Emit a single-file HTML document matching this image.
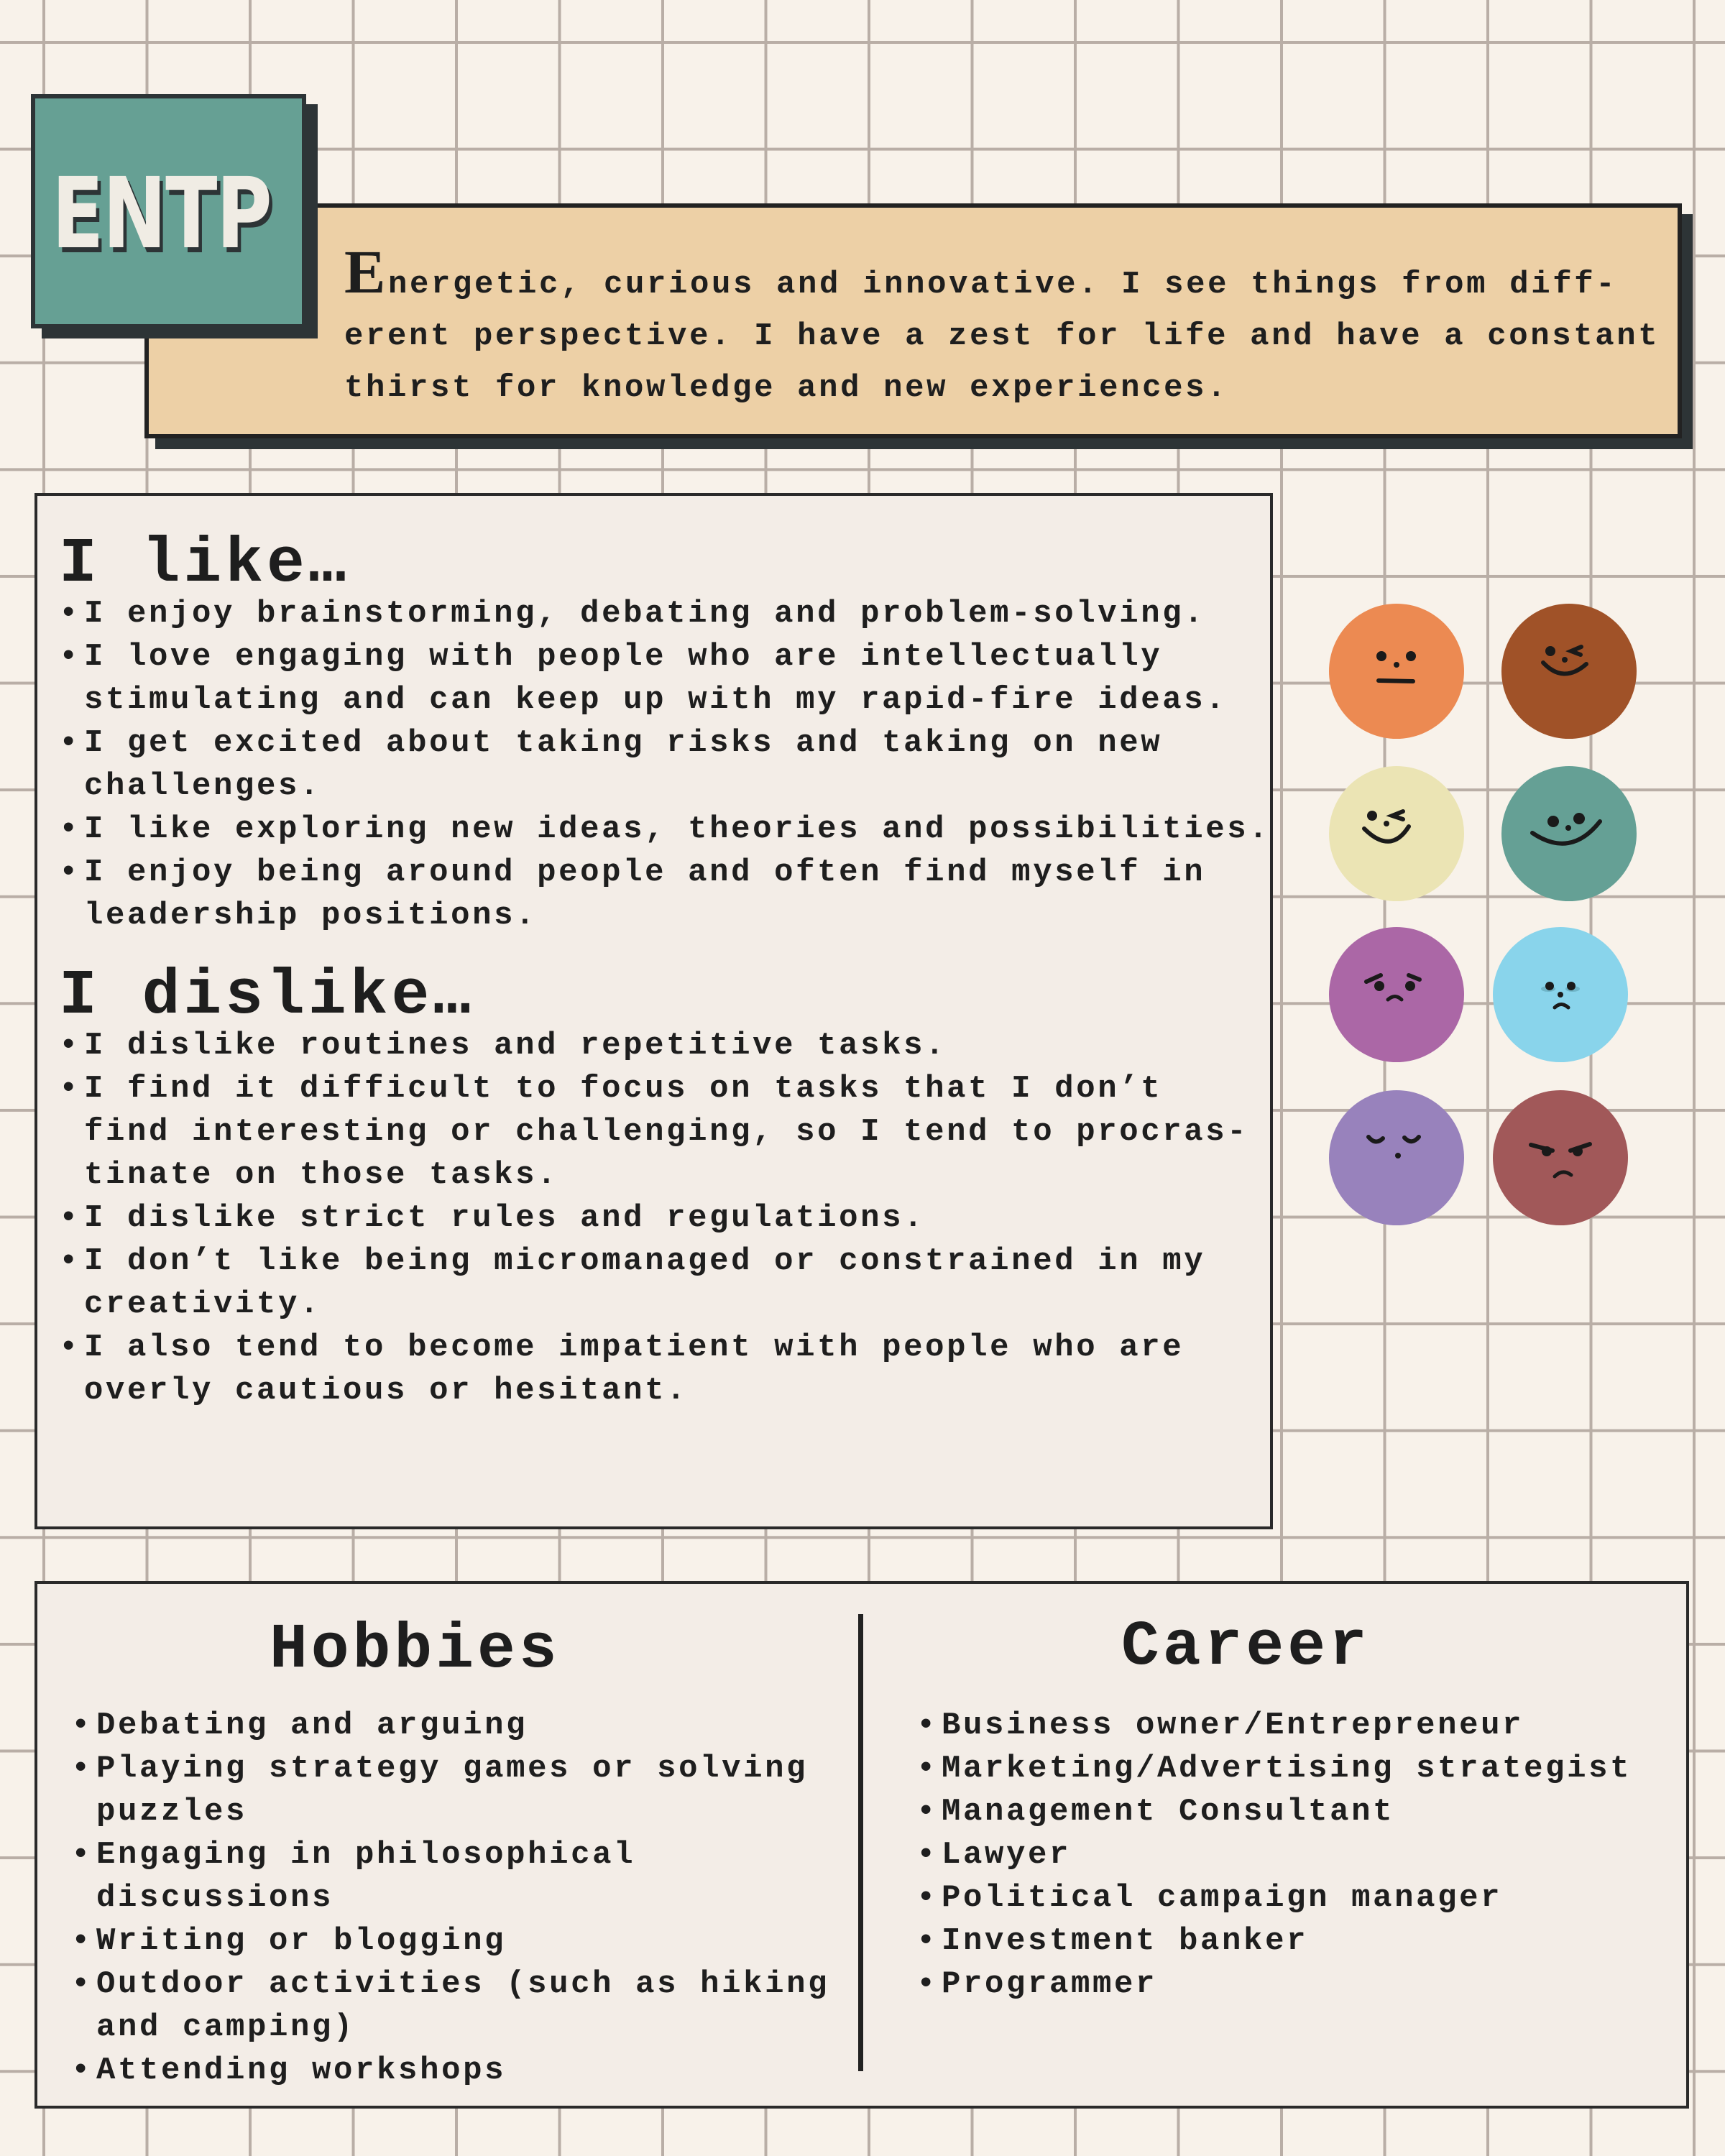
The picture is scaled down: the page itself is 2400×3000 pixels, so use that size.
<!DOCTYPE html>
<html><head><meta charset="utf-8"><style>
body{margin:0;width:2400px;height:3000px;position:relative;overflow:hidden;background-color:#f8f2ea;
background-image:linear-gradient(90deg,#b9aea6 4px,transparent 4px),linear-gradient(#b9aea6 4px,transparent 4px);
background-size:143.5px 100%,100% 148.6px;background-position:59px 0,0 57px;
font-family:"Liberation Mono",monospace;font-weight:bold;color:#1e1e1e}
.abs{position:absolute}
.t{font-size:44px;letter-spacing:3.6px;line-height:60px;white-space:nowrap}
.l{position:relative;padding-left:31px}
.l::before{content:"•";position:absolute;left:-4px;letter-spacing:0}
h2{margin:0;font-size:88px;line-height:88px;letter-spacing:5px;font-weight:bold;white-space:nowrap}
</style></head><body>
<div class="abs" style="left:216px;top:298px;width:2139px;height:327px;background:#2d3436"></div>
<div class="abs" style="left:201px;top:283px;width:2127px;height:315px;background:#edd0a6;border:6px solid #222"></div>
<div class="abs" style="left:58px;top:145px;width:384px;height:326px;background:#2d3436"></div>
<div class="abs" style="left:43px;top:131px;width:371px;height:314px;background:#66a094;border:6px solid #2d3436"></div>
<div class="abs" style="left:72px;top:218px;font-family:'DejaVu Sans',sans-serif;font-size:136px;line-height:160px;color:#f0ece4;text-shadow:6px 7px 0 #2d3436;transform:scaleX(0.78);transform-origin:0 0;letter-spacing:-2px">ENTP</div>
<div class="abs t" style="left:479px;top:360px;line-height:72px"><span style="font-family:'Liberation Serif',serif;font-size:86px;line-height:0">E</span>nergetic, curious and innovative. I see things from diff-<br>erent perspective. I have a zest for life and have a constant<br>thirst for knowledge and new experiences.</div>

<div class="abs" style="left:48px;top:686px;width:1715px;height:1434px;background:#f3ede7;border:4px solid #2a2a2a"></div>
<h2 class="abs" style="left:82px;top:742px">I like…</h2>
<div class="abs t" style="left:86px;top:824px">
<div class="l">I enjoy brainstorming, debating and problem-solving.</div>
<div class="l">I love engaging with people who are intellectually<br>stimulating and can keep up with my rapid-fire ideas.</div>
<div class="l">I get excited about taking risks and taking on new<br>challenges.</div>
<div class="l">I like exploring new ideas, theories and possibilities.</div>
<div class="l">I enjoy being around people and often find myself in<br>leadership positions.</div>
</div>
<h2 class="abs" style="left:82px;top:1343px">I dislike…</h2>
<div class="abs t" style="left:86px;top:1425px">
<div class="l">I dislike routines and repetitive tasks.</div>
<div class="l">I find it difficult to focus on tasks that I don’t<br>find interesting or challenging, so I tend to procras-<br>tinate on those tasks.</div>
<div class="l">I dislike strict rules and regulations.</div>
<div class="l">I don’t like being micromanaged or constrained in my<br>creativity.</div>
<div class="l">I also tend to become impatient with people who are<br>overly cautious or hesitant.</div>
</div>

<svg class="abs" style="left:0;top:0" width="2400" height="3000" viewBox="0 0 2400 3000">
<g stroke="#1a1a1a" stroke-width="6" stroke-linecap="round" fill="none">
<circle cx="1943" cy="934" r="94" fill="#ec8a52" stroke="none"/>
<circle cx="1922" cy="913" r="7" fill="#1a1a1a" stroke="none"/><circle cx="1963" cy="913" r="7" fill="#1a1a1a" stroke="none"/><circle cx="1943" cy="925" r="4" fill="#1a1a1a" stroke="none"/>
<path d="M1918 947 L1966 948"/>
<circle cx="2183" cy="934" r="94" fill="#a05228" stroke="none"/>
<circle cx="2157" cy="906" r="7" fill="#1a1a1a" stroke="none"/><circle cx="2177" cy="918" r="4" fill="#1a1a1a" stroke="none"/>
<path d="M2200 900 L2186 906 L2199 911"/>
<path d="M2147 922 Q2175 952 2207 924"/>
<circle cx="1943" cy="1160" r="94" fill="#ebe4b4" stroke="none"/>
<circle cx="1909" cy="1135" r="7" fill="#1a1a1a" stroke="none"/><circle cx="1929" cy="1146" r="4" fill="#1a1a1a" stroke="none"/>
<path d="M1952 1129 L1937 1135 L1952 1140"/>
<path d="M1898 1153 Q1935 1190 1960 1150"/>
<circle cx="2183" cy="1160" r="94" fill="#65a095" stroke="none"/>
<circle cx="2161" cy="1143" r="8" fill="#1a1a1a" stroke="none"/><circle cx="2197" cy="1139" r="8" fill="#1a1a1a" stroke="none"/><circle cx="2182" cy="1152" r="4" fill="#1a1a1a" stroke="none"/>
<path d="M2132 1159 Q2185 1195 2226 1143"/>
<circle cx="1943" cy="1384" r="94" fill="#ab67a6" stroke="none"/>
<path d="M1901 1366 L1921 1357"/><path d="M1960 1357 L1975 1363"/>
<circle cx="1919" cy="1372" r="7" fill="#1a1a1a" stroke="none"/><circle cx="1962" cy="1372" r="7" fill="#1a1a1a" stroke="none"/>
<path d="M1931 1391 Q1941 1382 1950 1391" stroke-width="5"/>
<circle cx="2171" cy="1384" r="94" fill="#89d4eb" stroke="none"/>
<ellipse cx="2154" cy="1376" rx="10" ry="4" fill="#6fb5c8" stroke="none"/><ellipse cx="2188" cy="1376" rx="10" ry="4" fill="#6fb5c8" stroke="none"/>
<circle cx="2156" cy="1372" r="6" fill="#1a1a1a" stroke="none"/><circle cx="2186" cy="1372" r="6" fill="#1a1a1a" stroke="none"/><circle cx="2171" cy="1384" r="4" fill="#1a1a1a" stroke="none"/>
<path d="M2163 1402 Q2172 1393 2182 1402" stroke-width="5"/>
<circle cx="1943" cy="1611" r="94" fill="#9882bc" stroke="none"/>
<path d="M1904 1582 Q1914 1594 1924 1584"/><path d="M1954 1583 Q1964 1594 1974 1582"/>
<circle cx="1945" cy="1608" r="4" fill="#1a1a1a" stroke="none"/>
<circle cx="2171" cy="1611" r="94" fill="#a15859" stroke="none"/>
<path d="M2130 1593 L2160 1601"/><path d="M2185 1601 L2212 1592"/>
<circle cx="2152" cy="1602" r="7" fill="#1a1a1a" stroke="none"/><circle cx="2195" cy="1602" r="7" fill="#1a1a1a" stroke="none"/>
<path d="M2163 1637 Q2174 1626 2186 1635" stroke-width="5"/>
</g>
</svg>

<div class="abs" style="left:48px;top:2200px;width:2294px;height:726px;background:#f3ede7;border:4px solid #2a2a2a"></div>
<div class="abs" style="left:1194px;top:2246px;width:7px;height:636px;background:#222"></div>
<h2 class="abs" style="left:375px;top:2253px">Hobbies</h2>
<h2 class="abs" style="left:1560px;top:2249px">Career</h2>
<div class="abs t" style="left:103px;top:2371px">
<div class="l">Debating and arguing</div>
<div class="l">Playing strategy games or solving<br>puzzles</div>
<div class="l">Engaging in philosophical<br>discussions</div>
<div class="l">Writing or blogging</div>
<div class="l">Outdoor activities (such as hiking<br>and camping)</div>
<div class="l">Attending workshops</div>
</div>
<div class="abs t" style="left:1279px;top:2371px">
<div class="l">Business owner/Entrepreneur</div>
<div class="l">Marketing/Advertising strategist</div>
<div class="l">Management Consultant</div>
<div class="l">Lawyer</div>
<div class="l">Political campaign manager</div>
<div class="l">Investment banker</div>
<div class="l">Programmer</div>
</div>
</body></html>
